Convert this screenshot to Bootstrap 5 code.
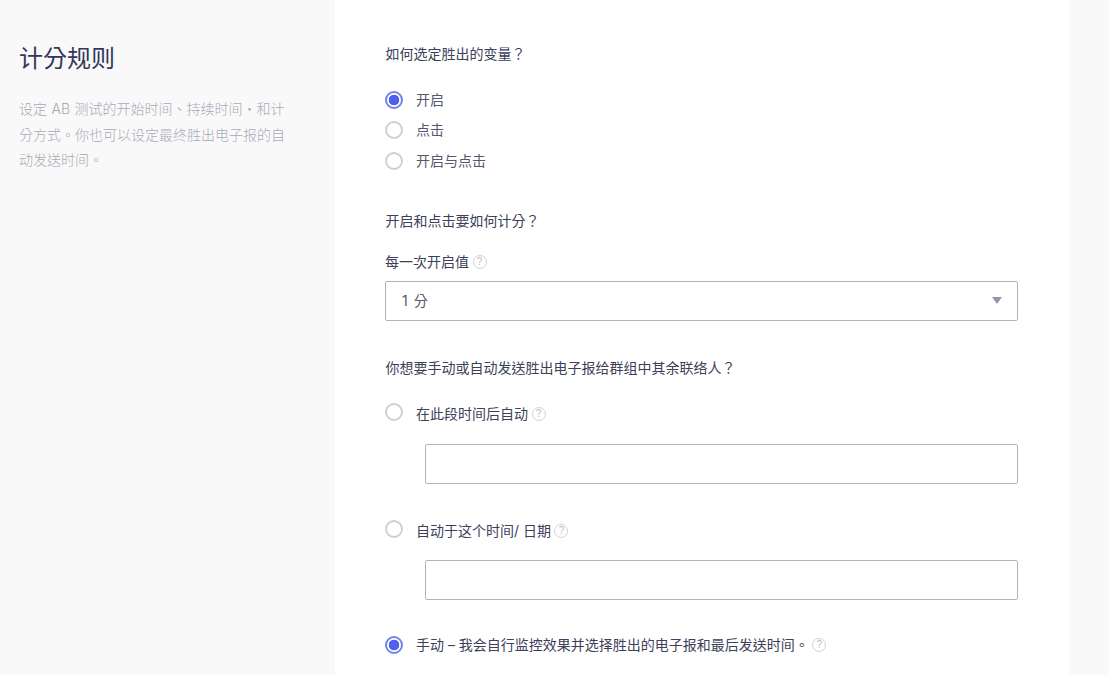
<!DOCTYPE html>
<html lang="zh-TW">
<head>
<meta charset="utf-8">
<title>计分规则</title>
<link href="https://cdn.jsdelivr.net/npm/bootstrap@5.3.0/dist/css/bootstrap.min.css" rel="stylesheet">
<style>
html,body{height:675px;overflow:hidden}
body{background:#f9f9f9;font-family:Inter,"Noto Sans CJK TC",sans-serif;font-size:14px;color:#3c4059}
.page-wrap{width:1109px;height:675px}
.side-col{width:335px;padding:43px 50px 0 19px}
.side-title{font-size:24px;line-height:32px;font-weight:400;color:#33375a;margin:0 0 21px}
.side-text{font-size:14px;line-height:25.5px;color:#a9a9b8;font-weight:300;margin:0;word-spacing:.6px}
.main-col{width:734px;background:#fff;padding:44px 51px 0 50px}
.q-label{font-size:14px;line-height:20px;color:#3c4059;margin:0;padding-left:.6px}
.radio-row{display:flex;align-items:center;gap:13px;height:30.5px;margin:0}
.radio-row .form-check-input{width:18px;height:18px;margin:0;flex:none;border:2px solid #cfcfd8;background-color:#fff}
.radio-row .form-check-input:checked{border-color:#7482ea;background-color:#fff;background-image:radial-gradient(circle,#4d61ee 0,#4d61ee 5px,transparent 5.6px)}
.radio-text{font-size:14px;color:#55586e;line-height:20px;display:flex;align-items:center}
.radio-text.dark{color:#3c4059}
.help-dot{display:inline-flex;align-items:center;justify-content:center;width:14px;height:14px;border:1.5px solid #d2d2da;border-radius:50%;font-size:10px;line-height:1;color:#bdbdc8;margin-left:3.5px;font-family:"Liberation Sans",sans-serif;flex:none}
.label-line{display:flex;align-items:center}
.box-input{height:40px;border:1px solid #b3b3c1;border-radius:2px;background:#fff}
.pick-box{display:flex;align-items:center;justify-content:space-between;padding:0 15px;font-size:14px;color:#55586e;word-spacing:2px}
.pick-box span:first-child{padding-left:1px}
.caret-shape{width:0;height:0;border-left:5px solid transparent;border-right:5px solid transparent;border-top:7px solid #9496ad}
.text-box{margin-left:40px}
.block-a{margin-top:20.5px}
.block-b{margin-top:34.5px}
.block-c{margin-top:37px}
.sub-label{font-size:14px;line-height:20px;color:#3c4059;margin:21px 0 9px}
.timed-row{display:flex;align-items:flex-start;gap:13px;height:41px;margin:0}
.timed-row .form-check-input{width:18px;height:18px;margin:0;flex:none;border:2px solid #cfcfd8}
.timed-row .radio-text{margin-top:1px;color:#3c4059}
.first-timed{margin-top:25px}
.gap-row{margin-top:36px;height:40px}
.manual-row{margin-top:30.5px}
</style>
</head>
<body>
<div class="page-wrap d-flex">
  <aside class="side-col">
    <h2 class="side-title">计分规则</h2>
    <p class="side-text">设定 AB 测试的开始时间、持续时间・和计分方式。你也可以设定最终胜出电子报的自动发送时间。</p>
  </aside>
  <main class="main-col">
    <p class="q-label">如何选定胜出的变量？</p>
    <div class="block-a">
      <label class="radio-row"><input class="form-check-input" type="radio" name="w" checked><span class="radio-text">开启</span></label>
      <label class="radio-row"><input class="form-check-input" type="radio" name="w"><span class="radio-text">点击</span></label>
      <label class="radio-row"><input class="form-check-input" type="radio" name="w"><span class="radio-text">开启与点击</span></label>
    </div>
    <p class="q-label block-b">开启和点击要如何计分？</p>
    <p class="sub-label label-line">每一次开启值<span class="help-dot">?</span></p>
    <div class="box-input pick-box"><span>1 分</span><span class="caret-shape"></span></div>
    <p class="q-label block-c">你想要手动或自动发送胜出电子报给群组中其余联络人？</p>
    <label class="timed-row first-timed"><input class="form-check-input" type="radio" name="s"><span class="radio-text">在此段时间后自动<span class="help-dot">?</span></span></label>
    <div class="box-input text-box"></div>
    <label class="timed-row gap-row"><input class="form-check-input" type="radio" name="s"><span class="radio-text">自动于这个时间/ 日期<span class="help-dot">?</span></span></label>
    <div class="box-input text-box"></div>
    <label class="radio-row manual-row"><input class="form-check-input" type="radio" name="s" checked><span class="radio-text dark">手动 – 我会自行监控效果并选择胜出的电子报和最后发送时间。<span class="help-dot">?</span></span></label>
  </main>
</div>
<script src="https://cdn.jsdelivr.net/npm/bootstrap@5.3.0/dist/js/bootstrap.bundle.min.js"></script>
</body>
</html>
